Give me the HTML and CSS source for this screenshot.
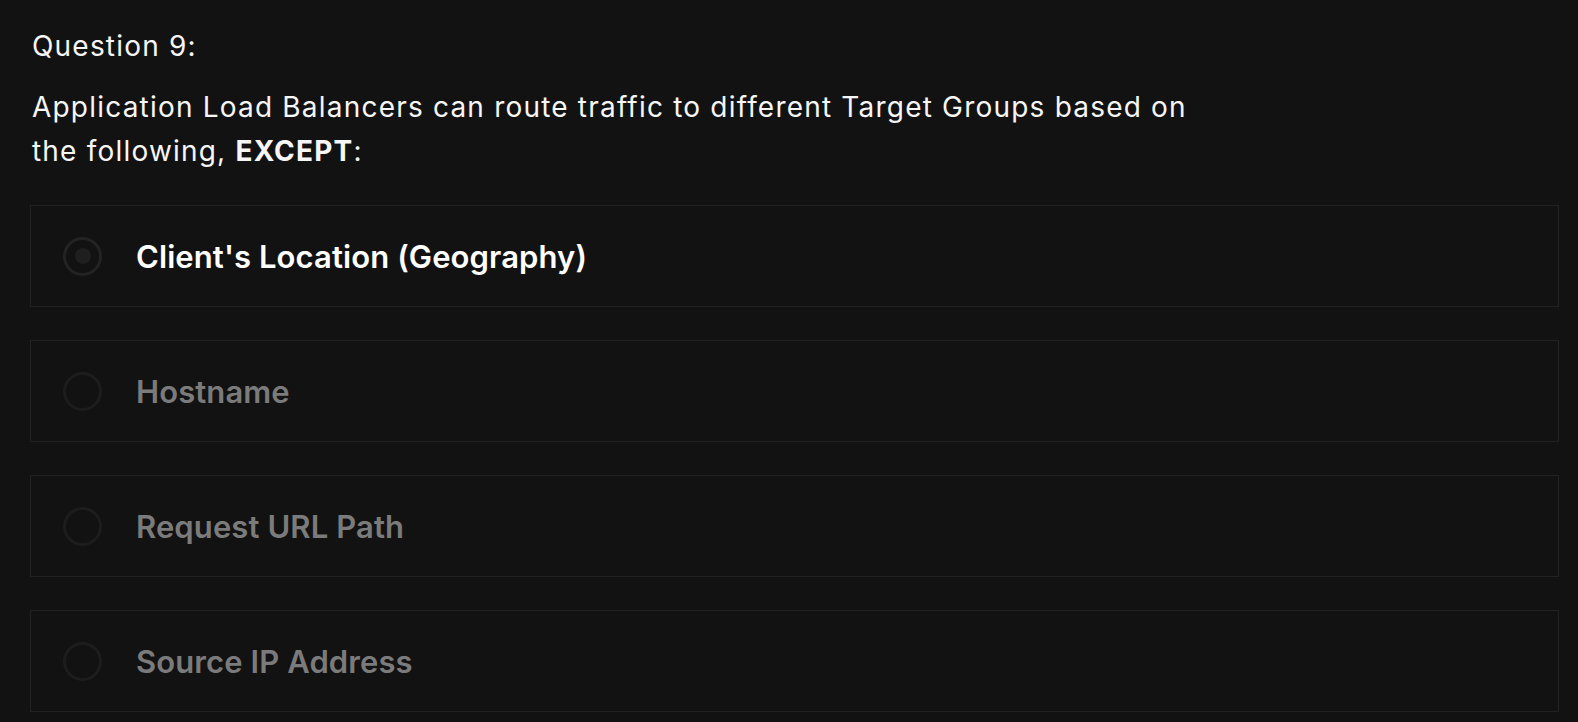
FILE: index.html
```html
<!DOCTYPE html>
<html>
<head>
<meta charset="utf-8">
<link rel="stylesheet" href="styles.css">
</head>
<body>
<div class="page">
  <div class="qnum">Question 9:</div>
  <p class="qtext">Application Load Balancers can route traffic to different Target Groups based on the following, <b>EXCEPT</b>:</p>
  <div class="options">
    <div class="option selected"><span class="radio"></span><span class="label">Client's Location (Geography)</span></div>
    <div class="option"><span class="radio"></span><span class="label">Hostname</span></div>
    <div class="option"><span class="radio"></span><span class="label">Request URL Path</span></div>
    <div class="option"><span class="radio"></span><span class="label">Source IP Address</span></div>
  </div>
</div>
</body>
</html>
```
FILE: styles.css
```css
html, body {
  margin: 0;
  padding: 0;
  background: #121212;
}
body {
  font-family: Inter, "Noto Sans", sans-serif;
  color: #f6f6f6;
  overflow: hidden;
}
.page {
  padding: 24px 19px 0 30px;
}
.qnum {
  font-size: 28px;
  line-height: 44px;
  letter-spacing: 1.2px;
  padding-left: 2px;
  margin-bottom: 17px;
}
.qtext {
  margin: 0 0 32px 0;
  padding-left: 2px;
  font-size: 28px;
  line-height: 44px;
  letter-spacing: 1.2px;
  max-width: 1195px;
}
.qtext b {
  font-weight: 700;
}
.options {
  display: flex;
  flex-direction: column;
  gap: 33px;
}
.option {
  height: 100px;
  border: 1px solid #222222;
  display: flex;
  align-items: center;
  padding-left: 32px;
  gap: 34px;
}
.radio {
  width: 33px;
  height: 33px;
  border: 3px solid #1d1d1d;
  border-radius: 50%;
  flex: none;
  display: flex;
  align-items: center;
  justify-content: center;
}
.selected .radio {
  border-color: #232323;
}
.selected .radio::after {
  content: "";
  width: 16px;
  height: 16px;
  border-radius: 50%;
  background: #1f1f1f;
}
.label {
  font-size: 31px;
  font-weight: 600;
  color: #7b7b7b;
  letter-spacing: 0.1px;
}
.selected .label {
  color: #ffffff;
}
```
